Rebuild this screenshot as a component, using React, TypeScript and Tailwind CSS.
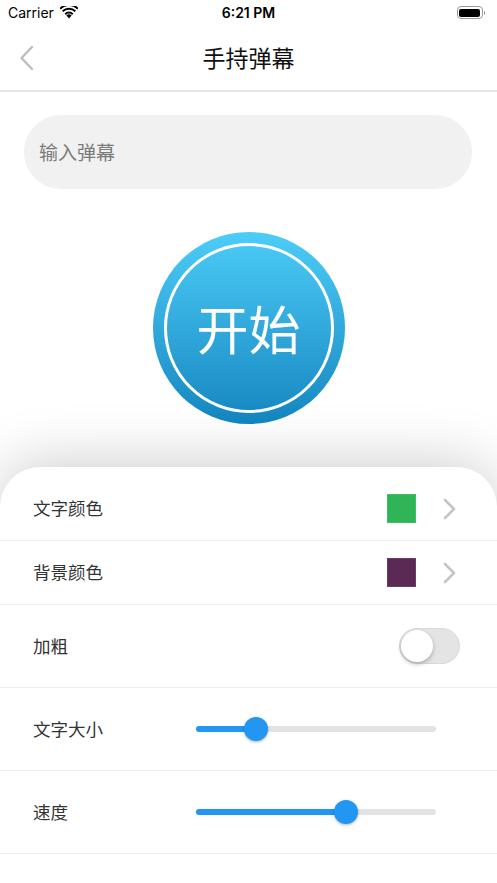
import React from "react";

const cjk = { fontFamily: '"Noto Sans CJK SC", "Noto Sans", sans-serif' };

function Chevron() {
  return (
    <svg width="16" height="24" viewBox="0 0 16 24" fill="none">
      <path d="M3 3l9 9-9 9" stroke="#c4c4c4" strokeWidth="2.6" strokeLinecap="round" strokeLinejoin="round" />
    </svg>
  );
}

function Slider({ value }: { value: number }) {
  return (
    <div className="relative h-[24px] w-[240px] flex items-center">
      <div className="h-[6px] w-full rounded-full bg-[#e3e3e3]" />
      <div className="absolute left-0 h-[6px] rounded-full bg-[#2196f3]" style={{ width: `${value * 100}%` }} />
      <div
        className="absolute h-[24px] w-[24px] rounded-full bg-[#2196f3] shadow-[0_1px_3px_rgba(0,0,0,0.3)]"
        style={{ left: `calc(${value * 100}% - 12px)` }}
      />
    </div>
  );
}

function Row({ label, h, children }: { label: string; h: string; children?: React.ReactNode }) {
  return (
    <div className={`flex items-center justify-between pl-[33px] border-b border-[#eeeeee] ${h}`}>
      <span className="text-[17.5px] text-[#333333]" style={cjk}>
        {label}
      </span>
      {children}
    </div>
  );
}

export default function App() {
  return (
    <div className="w-[497px] h-[883px] bg-white flex flex-col overflow-hidden">
      {/* status bar */}
      <div className="h-[25px] flex items-center justify-between px-[8px] relative" style={{ fontFamily: "Inter, sans-serif" }}>
        <div className="flex items-center gap-[6px] text-[14px] text-black">
          <span>Carrier</span>
          <svg width="18" height="13" viewBox="0 0 18 13">
            <path d="M9 12.5l-2.6-3a3.6 3.6 0 0 1 5.2 0z" fill="#000" />
            <path d="M4.6 7.4a6.3 6.3 0 0 1 8.8 0l-1.3 1.5a4.3 4.3 0 0 0-6.2 0z" fill="#000" />
            <path d="M2 4.6a10 10 0 0 1 14 0l-1.3 1.5a8 8 0 0 0-11.4 0z" fill="#000" />
            <path d="M-0.5 1.9a13.6 13.6 0 0 1 19 0l-1.3 1.5a11.6 11.6 0 0 0-16.4 0z" fill="#000" />
          </svg>
        </div>
        <span className="absolute left-1/2 -translate-x-1/2 text-[14px] font-semibold text-black">6:21 PM</span>
        <div className="flex items-center pr-[4px]">
          <div className="w-[26px] h-[13px] rounded-[4px] border border-[#9a9a9a] p-[1.5px]">
            <div className="w-full h-full rounded-[2px] bg-black" />
          </div>
          <div className="w-[1.5px] h-[4px] bg-[#9a9a9a] ml-[1px] rounded-r" />
        </div>
      </div>

      {/* nav */}
      <div className="h-[67px] flex items-center relative border-b-2 border-[#e6e6e6]">
        <svg className="absolute left-[19px]" width="16" height="26" viewBox="0 0 16 26" fill="none">
          <path d="M13 2L2.5 13 13 24" stroke="#bdbdbd" strokeWidth="2.4" strokeLinecap="round" strokeLinejoin="round" />
        </svg>
        <span className="mx-auto text-[23px] text-[#111111]" style={cjk}>
          手持弹幕
        </span>
      </div>

      {/* input */}
      <div className="mt-[23px] ml-[24px] mr-[25px] h-[74px] rounded-full bg-[#f1f1f1] flex items-center px-[15px]">
        <span className="text-[19px] text-[#7a7a7a]" style={cjk}>
          输入弹幕
        </span>
      </div>

      {/* start button */}
      <div className="flex justify-center mt-[43px]">
        <div className="w-[192px] h-[192px] rounded-full bg-gradient-to-b from-[#4ccdf8] to-[#1386c0] flex items-center justify-center">
          <div className="w-[170px] h-[170px] rounded-full border-[3px] border-white flex items-center justify-center">
            <span className="text-[52px] text-white leading-none" style={cjk}>
              开始
            </span>
          </div>
        </div>
      </div>

      {/* settings card */}
      <div className="mt-[43px] flex-1 bg-white rounded-t-[40px] pt-[10px] shadow-[0_-4px_60px_rgba(0,0,0,0.2)]">
        <Row label="文字颜色" h="h-[64px]">
          <div className="flex items-center gap-[26px] pr-[39px]">
            <div className="w-[29px] h-[29px] bg-[#2fb457] border border-[#3cc060]" />
            <Chevron />
          </div>
        </Row>
        <Row label="背景颜色" h="h-[64px]">
          <div className="flex items-center gap-[26px] pr-[39px]">
            <div className="w-[29px] h-[29px] bg-[#5a2a55] border border-[#6e3a68]" />
            <Chevron />
          </div>
        </Row>
        <Row label="加粗" h="h-[83px]">
          <div className="mr-[37px] w-[61px] h-[36px] rounded-full bg-[#e4e4e4] border border-[#d9d9d9] relative">
            <div className="absolute left-[1px] top-[1px] w-[32px] h-[32px] rounded-full bg-white shadow-[0_2px_4px_rgba(0,0,0,0.25)]" />
          </div>
        </Row>
        <Row label="文字大小" h="h-[83px]">
          <div className="mr-[61px]">
            <Slider value={0.25} />
          </div>
        </Row>
        <Row label="速度" h="h-[83px]">
          <div className="mr-[61px]">
            <Slider value={0.625} />
          </div>
        </Row>
      </div>
    </div>
  );
}
